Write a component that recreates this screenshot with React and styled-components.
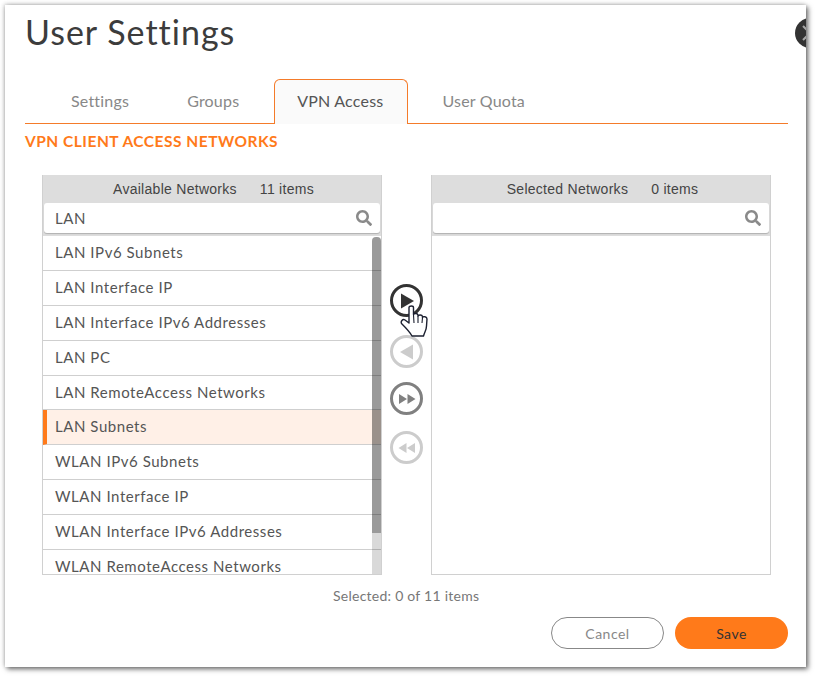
import React from 'react';
import styled, { createGlobalStyle } from 'styled-components';
import { FaSearch } from 'react-icons/fa';

const availableNetworks = [
  'LAN IPv6 Subnets',
  'LAN Interface IP',
  'LAN Interface IPv6 Addresses',
  'LAN PC',
  'LAN RemoteAccess Networks',
  'LAN Subnets',
  'WLAN IPv6 Subnets',
  'WLAN Interface IP',
  'WLAN Interface IPv6 Addresses',
  'WLAN RemoteAccess Networks'
];

const tabs = ['Settings', 'Groups', 'VPN Access', 'User Quota'];

const Shuttle = ({ shape, dim, dark, offset }) => {
  const color = dark ? '#333333' : dim ? '#cccccc' : '#808080';
  return (
    <ShuttleButton $color={color} $offset={offset}>
      <svg width="20" height="16" viewBox="0 0 20 16">
        {shape === 'right' && <path d="M4 0.5 L17 8 L4 15.5 Z" fill={color} />}
        {shape === 'left' && <path d="M16 0.5 L3 8 L16 15.5 Z" fill={color} />}
        {shape === 'allRight' && <path d="M2 3 L10 8 L2 13 Z M10.5 3 L18.5 8 L10.5 13 Z" fill={color} />}
        {shape === 'allLeft' && <path d="M18 3 L10 8 L18 13 Z M9.5 3 L1.5 8 L9.5 13 Z" fill={color} />}
      </svg>
    </ShuttleButton>
  );
};

const App = () => {
  return (
    <>
      <GlobalStyle />
      <Modal>
        <CloseButton>
          <svg width="30" height="30" viewBox="0 0 30 30">
            <path d="M8 8 L22 22 M8 22 L22 8" stroke="#a8a8a8" strokeWidth="2" fill="none" />
          </svg>
        </CloseButton>
        <Title>User Settings</Title>
        <TabBar>
          {tabs.map((tab) => (
            <Tab key={tab} $active={tab === 'VPN Access'}>{tab}</Tab>
          ))}
        </TabBar>
        <Heading>VPN CLIENT ACCESS NETWORKS</Heading>
        <Columns>
          <Panel>
            <PanelTop>
              <PanelHeader>
                <span>Available Networks</span>
                <span>11 items</span>
              </PanelHeader>
              <SearchBox>
                <SearchText>LAN</SearchText>
                <FaSearch size={16} color="#8a8a8a" />
              </SearchBox>
            </PanelTop>
            <ListArea>
              {availableNetworks.map((name) => (
                <Row key={name} $selected={name === 'LAN Subnets'}>{name}</Row>
              ))}
              <ScrollTrack>
                <ScrollThumb />
              </ScrollTrack>
            </ListArea>
          </Panel>
          <Buttons>
            <Shuttle shape="right" dark offset={0} />
            <Shuttle shape="left" dim offset={18} />
            <Shuttle shape="allRight" offset={14} />
            <Shuttle shape="allLeft" dim offset={16} />
            <Cursor width="28" height="32" viewBox="0 0 28 32">
              <path
                d="M9 2.5 C9 0.5 13.5 0.5 13.5 2.5 L13.5 9.5 C14 8 17.5 8 18 10 L18 11 C18.5 9.5 22 9.5 22.5 11.5 L22.5 12.5 C23 11 27 11.5 27 14 L26.5 21 C26.5 25 24.5 27 23.5 31 L12 31 C10 27 6 23 1.5 18.5 C0.5 16.5 2.5 13.5 5 15 L9 18 Z"
                fill="#ffffff"
                stroke="#1c2030"
                strokeWidth="1.4"
                strokeLinejoin="round"
              />
              <path d="M13.5 10 L14 18 M18 11 L18 18 M22.5 12.5 L22 18" stroke="#1c2030" strokeWidth="1.1" fill="none" />
            </Cursor>
          </Buttons>
          <Panel>
            <PanelTop>
              <PanelHeader>
                <span>Selected Networks</span>
                <span>0 items</span>
              </PanelHeader>
              <SearchBox>
                <SearchText />
                <FaSearch size={16} color="#8a8a8a" />
              </SearchBox>
            </PanelTop>
            <ListArea />
          </Panel>
        </Columns>
        <Summary>Selected: 0 of 11 items</Summary>
        <Footer>
          <CancelButton>Cancel</CancelButton>
          <SaveButton>Save</SaveButton>
        </Footer>
      </Modal>
    </>
  );
};

const GlobalStyle = createGlobalStyle`
  html, body {
    height: 100%;
    margin: 0;
    background: #ffffff;
  }
  body {
    font-family: "Lato", "Open Sans", sans-serif;
    overflow: hidden;
  }
  #root {
    padding: 5px 0 0 5px;
  }
`;

const Modal = styled.div`
  position: relative;
  box-sizing: border-box;
  width: 801px;
  height: 662px;
  padding: 0 18px 0 20px;
  background: #ffffff;
  box-shadow: 2px 2px 5px rgba(0, 0, 0, 0.6), -1px -1px 4px rgba(0, 0, 0, 0.18);
  overflow: hidden;
`;

const CloseButton = styled.div`
  position: absolute;
  top: 13px;
  right: -19px;
  width: 30px;
  height: 30px;
  border-radius: 50%;
  background: #333333;
  svg {
    display: block;
  }
`;

const Title = styled.h1`
  margin: 0;
  padding-top: 6px;
  height: 68px;
  box-sizing: border-box;
  font-size: 34px;
  line-height: 42px;
  font-weight: 400;
  letter-spacing: 1px;
  color: #3c3c3c;
`;

const TabBar = styled.div`
  display: flex;
  gap: 12px;
  height: 44px;
  margin-top: 6px;
  padding-left: 23px;
  border-bottom: 1px solid #f47b2a;
`;

const Tab = styled.div`
  display: flex;
  align-items: center;
  justify-content: center;
  box-sizing: border-box;
  height: 45px;
  padding: ${(props) => (props.$active ? '0 24px 3px 22px' : '0 22px 3px')};
  margin-right: ${(props) => (props.$active ? '-1px' : '0')};
  font-size: 16px;
  letter-spacing: 0.2px;
  color: ${(props) => (props.$active ? '#555555' : '#888888')};
  background: ${(props) => (props.$active ? '#fafafa' : 'transparent')};
  border: ${(props) => (props.$active ? '1px solid #f47b2a' : '1px solid transparent')};
  border-bottom: none;
  border-radius: 6px 6px 0 0;
`;

const Heading = styled.h2`
  margin: 0;
  padding-top: 9px;
  height: 51px;
  box-sizing: border-box;
  font-family: "Lato", sans-serif;
  font-size: 15.5px;
  line-height: 17px;
  font-weight: 700;
  letter-spacing: 0.5px;
  color: #ff7a1a;
`;

const Columns = styled.div`
  display: flex;
  height: 400px;
  margin-left: 17px;
`;

const Panel = styled.div`
  display: flex;
  flex-direction: column;
  box-sizing: border-box;
  width: 340px;
  border: 1px solid #d0d0d0;
  border-top: none;
`;

const PanelTop = styled.div`
  flex-shrink: 0;
  box-sizing: border-box;
  height: 61px;
  padding: 0 0 3px;
  background: #dddddd;
`;

const PanelHeader = styled.div`
  display: flex;
  justify-content: center;
  gap: 23px;
  height: 28px;
  line-height: 28px;
  padding-left: 3px;
  font-family: "Liberation Sans", Arial, sans-serif;
  font-size: 14px;
  letter-spacing: 0.28px;
  color: #444444;
`;

const SearchBox = styled.div`
  display: flex;
  align-items: center;
  justify-content: space-between;
  box-sizing: border-box;
  height: 30px;
  padding: 0 8px 0 11px;
  margin: 0 1px;
  background: #ffffff;
  border-radius: 3px;
  box-shadow: 0 1px 1px rgba(0, 0, 0, 0.2);
`;

const SearchText = styled.div`
  font-size: 15px;
  letter-spacing: 0.55px;
  color: #555555;
`;

const ListArea = styled.div`
  position: relative;
  flex: 1;
  min-height: 0;
  overflow: hidden;
`;

const Row = styled.div`
  box-sizing: border-box;
  height: 34.9px;
  padding-left: ${(props) => (props.$selected ? '8px' : '12px')};
  line-height: 33.5px;
  font-size: 15px;
  letter-spacing: 0.55px;
  color: #555555;
  white-space: nowrap;
  border-bottom: 1px solid #cfcfcf;
  background: ${(props) => (props.$selected ? '#fff0e7' : '#ffffff')};
  border-left: ${(props) => (props.$selected ? '4px solid #ff7a1a' : 'none')};
`;

const ScrollTrack = styled.div`
  position: absolute;
  top: 1px;
  right: 0;
  bottom: 0;
  width: 9px;
  background: rgba(0, 0, 0, 0.15);
  border-radius: 4px 4px 0 0;
`;

const ScrollThumb = styled.div`
  height: 296px;
  background: rgba(0, 0, 0, 0.29);
  border-radius: 4px 4px 0 0;
`;

const Buttons = styled.div`
  position: relative;
  display: flex;
  flex-direction: column;
  align-items: center;
  width: 49px;
  padding-top: 109px;
  box-sizing: border-box;
`;

const ShuttleButton = styled.button`
  display: flex;
  align-items: center;
  justify-content: center;
  flex-shrink: 0;
  box-sizing: border-box;
  width: 33px;
  height: 33px;
  margin-top: ${(props) => props.$offset}px;
  padding: 0;
  border: 3px solid ${(props) => props.$color};
  border-radius: 50%;
  background: #ffffff;
`;

const Cursor = styled.svg`
  position: absolute;
  top: 130px;
  left: 18px;
`;

const Summary = styled.div`
  margin-top: 12px;
  height: 18px;
  line-height: 18px;
  padding-left: 308px;
  font-size: 14px;
  letter-spacing: 0.25px;
  color: #777777;
`;

const Footer = styled.div`
  display: flex;
  justify-content: flex-end;
  gap: 11px;
  margin-top: 12px;
`;

const CancelButton = styled.button`
  box-sizing: border-box;
  width: 113px;
  height: 32px;
  border: 1px solid #888888;
  border-radius: 16px;
  background: #ffffff;
  color: #888888;
  font-family: "Lato", sans-serif;
  font-size: 14px;
  letter-spacing: 0.5px;
`;

const SaveButton = styled.button`
  box-sizing: border-box;
  width: 113px;
  height: 32px;
  border: none;
  border-radius: 16px;
  background: #ff7a1a;
  color: #333333;
  font-family: "Lato", sans-serif;
  font-size: 14px;
  letter-spacing: 0.5px;
`;

export default App;
